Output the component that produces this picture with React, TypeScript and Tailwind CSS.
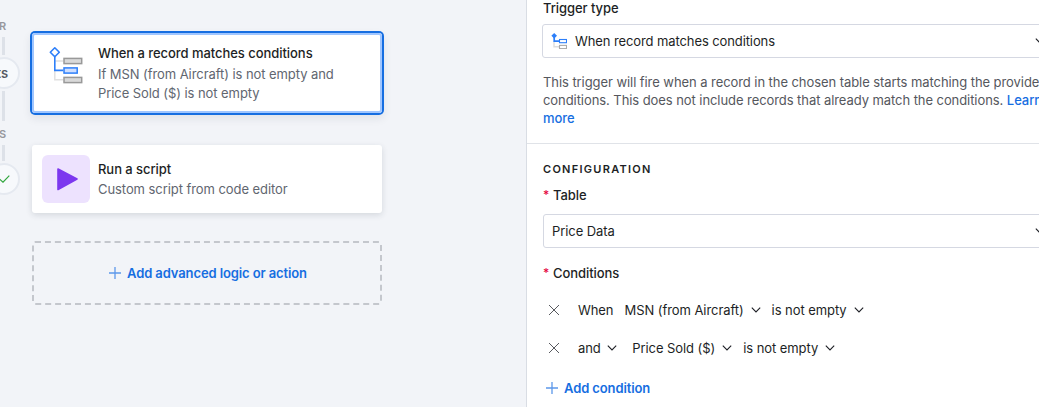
import type { ReactNode } from "react";

function ConditionsIcon() {
  return (
    <svg width="48" height="48" viewBox="0 0 48 48" fill="none" className="shrink-0">
      <path d="M12.8 28v8.8h8.4M13.5 17.9h7.7" stroke="#e0e0e0" strokeWidth="1.5" />
      <path d="M12.8 14v13.4h8.4" stroke="#2d7ff9" strokeWidth="1.6" />
      <path d="M12.8 4.8l4.5 4.4-4.5 4.5-4.5-4.5z" stroke="#2d7ff9" strokeWidth="1.6" strokeLinejoin="round" />
      <rect x="22" y="15.4" width="17.7" height="5.2" fill="#d9d9d9" stroke="#999" strokeWidth="1.5" />
      <rect x="22" y="24.9" width="13.2" height="5.2" fill="#cfdfff" stroke="#2d7ff9" strokeWidth="1.5" />
      <rect x="22" y="34.4" width="17.7" height="5.2" fill="#d9d9d9" stroke="#999" strokeWidth="1.5" />
    </svg>
  );
}

function SmallConditionsIcon() {
  return (
    <svg width="16" height="16" viewBox="0 0 16 16" fill="none" className="shrink-0">
      <path d="M3 8.5v5.2h5" stroke="#ddd" strokeWidth="1.4" />
      <path d="M3.2 3v5.2h5" stroke="#2d7ff9" strokeWidth="1.7" />
      <path d="M3.2 0L6 2.8 3.2 5.6 0.4 2.8z" fill="#2d7ff9" />
      <rect x="8.5" y="6.5" width="7" height="3.2" fill="#fff" stroke="#2d7ff9" strokeWidth="1.1" />
      <rect x="8.5" y="12.4" width="7" height="3.2" fill="#fff" stroke="#aaa" strokeWidth="1.1" />
    </svg>
  );
}

function Chevron() {
  return (
    <svg width="10" height="6" viewBox="0 0 10 6" fill="none" className="shrink-0">
      <path d="M0.8 0.7L5 4.9 9.2 0.7" stroke="#1d1f25" strokeWidth="1.1" />
    </svg>
  );
}

function Plus() {
  return (
    <svg width="12" height="12" viewBox="0 0 12 12" className="shrink-0">
      <path d="M6 0v12M0 6h12" stroke="#5c98ea" strokeWidth="1.3" />
    </svg>
  );
}

function Cross() {
  return (
    <svg width="10" height="10" viewBox="0 0 10 10" className="shrink-0">
      <path d="M0 0l10 10M10 0L0 10" stroke="#45474d" strokeWidth="0.9" />
    </svg>
  );
}

function Select({ children, className }: { children: ReactNode; className: string }) {
  return (
    <div className={`flex h-[34px] items-center rounded-[3px] border border-[#d5d8e2] bg-white pr-[9px] ${className}`}>
      {children}
      <span className="ml-auto">
        <Chevron />
      </span>
    </div>
  );
}

function Rail() {
  return (
    <div className="flex w-5 shrink-0 flex-col overflow-hidden text-[11px] font-semibold text-[#96989d]">
      <span className="-ml-px mt-[19px] h-[18px] leading-[15px]">R</span>
      <span className="ml-0.5 h-[18px] w-[3px] bg-[#dde1e8]" />
      <span className="-ml-3 mt-0.5 flex h-8 w-8 items-center justify-end rounded-full border-2 border-[#e5e9f0] bg-[#f7f9fc] pt-0.5 pr-[10px] text-[13px] font-semibold text-[#555962]">
        ts
      </span>
      <span className="ml-0.5 mt-0.5 h-[30px] w-[3px] bg-[#dde1e8]" />
      <span className="-ml-px mt-[6px] h-[18px] leading-[15px]">S</span>
      <span className="ml-0.5 h-4 w-[3px] bg-[#dde1e8]" />
      <span className="-ml-3 mt-0.5 flex h-8 w-8 items-center justify-center rounded-full border-2 border-[#e5e9f0] bg-[#f7f9fc]">
        <svg width="11" height="8" viewBox="0 0 11 8" fill="none" className="shrink-0">
          <path d="M0.5 4L4 7.2 10.3 0.7" stroke="#2fa63c" strokeWidth="1.2" />
        </svg>
      </span>
    </div>
  );
}

export default function App() {
  return (
    <div className="flex h-[407px] w-full overflow-hidden bg-[#f2f4f8] font-['Inter',sans-serif] text-[13px] tracking-[-0.07px] whitespace-nowrap text-[#1d1f25]">
      <div className="flex w-[526px] shrink-0">
        <Rail />
        <div className="ml-3 mt-[33px] w-[350px]">
          <div className="flex h-20 rounded-[3px] bg-white p-[10px] shadow-[inset_0_0_0_2px_#a0c6ff,0_0_0_2px_#166ee1,0_4px_8px_2px_rgba(30,40,60,0.08)]">
            <ConditionsIcon />
            <div className="ml-2">
              <h3 className="leading-[21px] font-medium tracking-[-0.05px]">When a record matches conditions</h3>
              <p className="mt-px leading-[19px] text-[#616670]">
                If MSN (from Aircraft) is not empty and
                <br />
                Price Sold ($) is not empty
              </p>
            </div>
          </div>
          <div className="mt-8 flex h-[68px] rounded-[3px] bg-white p-[10px] shadow-[0_2px_6px_rgba(30,40,60,0.14)]">
            <div className="flex h-12 w-12 items-center justify-center rounded-md bg-[#ede2fe]">
              <svg width="24" height="24" viewBox="0 0 24 24">
                <path d="M4 2L23 12 4 22.5z" fill="#7c37ef" stroke="#7c37ef" strokeWidth="1.6" strokeLinejoin="round" />
              </svg>
            </div>
            <div className="ml-2 pt-1">
              <h3 className="leading-[21px] font-medium tracking-[-0.05px]">Run a script</h3>
              <p className="leading-[19px] text-[#616670]">Custom script from code editor</p>
            </div>
          </div>
          <button className="mt-7 flex h-16 w-full items-center justify-center gap-[6px] rounded-[3px] border-2 border-dashed border-[#c4c7cd] pl-0.5 font-semibold tracking-[-0.11px] text-[#166ee1]">
            <Plus />
            <span className="pt-0.5">Add advanced logic or action</span>
          </button>
        </div>
      </div>

      <div className="flex-1 overflow-hidden border-l border-[#d9dde4] bg-white">
        <div className="ml-4 w-[512px]">
          <div className="leading-[17px] font-medium">Trigger type</div>
          <Select className="-ml-px mt-[7px] pl-2">
            <SmallConditionsIcon />
            <span className="ml-2 pt-0.5 tracking-[-0.1px]">When record matches conditions</span>
          </Select>
          <p className="mt-[15px] leading-[18px] text-[#55575d]">
            This trigger will fire when a record in the chosen table starts matching the provided
            <br />
            conditions. This does not include records that already match the conditions.{" "}
            <a className="font-medium text-[#166ee1]">
              Learn
              <br />
              more
            </a>
          </p>
          <div className="-ml-4 mt-4 h-px bg-[#e0e3e8]" />
          <h2 className="mt-4 text-[11px] leading-[18px] font-semibold tracking-[1.28px]">CONFIGURATION</h2>
          <div className="mt-2 flex items-center leading-[18px] font-medium">
            <span className="w-[10px] text-[12px] text-[#e5083f]">*</span>
            Table
          </div>
          <Select className="mt-[10px] pl-2">
            <span className="pt-0.5">Price Data</span>
          </Select>
          <div className="mt-4 flex items-center leading-[18px] font-medium">
            <span className="w-[10px] text-[12px] text-[#e5083f]">*</span>
            Conditions
          </div>
          <div className="mt-[18px] flex h-5 items-center pl-[6px]">
            <Cross />
            <span className="ml-[19px] pt-0.5">When</span>
            <span className="mr-[7px] ml-[11px] pt-0.5">MSN (from Aircraft)</span>
            <Chevron />
            <span className="mr-[7px] ml-[11px] pt-0.5">is not empty</span>
            <Chevron />
          </div>
          <div className="mt-[18px] flex h-5 items-center pl-[6px]">
            <Cross />
            <span className="mr-[6px] ml-[19px] pt-0.5">and</span>
            <Chevron />
            <span className="mr-[7px] ml-[15.5px] pt-0.5">Price Sold ($)</span>
            <Chevron />
            <span className="mr-[7px] ml-[11px] pt-0.5">is not empty</span>
            <Chevron />
          </div>
          <button className="mt-5 flex h-5 items-center gap-[6px] pl-[3px] font-semibold tracking-[-0.11px] text-[#166ee1]">
            <Plus />
            <span className="pt-0.5">Add condition</span>
          </button>
        </div>
      </div>
    </div>
  );
}
